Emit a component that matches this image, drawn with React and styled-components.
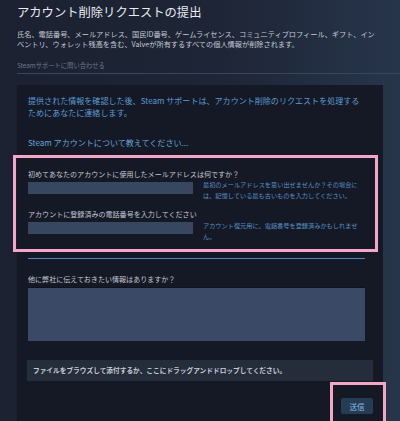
import styled, { createGlobalStyle } from 'styled-components'

const GlobalStyle = createGlobalStyle`
  html, body {
    margin: 0;
    padding: 0;
    height: 421px;
    overflow: hidden;
  }
  body {
    background: linear-gradient(90deg, #1b2130 0%, #1e2536 55%, #27354b 100%);
    font-family: "Noto Sans CJK JP", "Liberation Sans", sans-serif;
  }
`

const Page = styled.div`
  padding: 4px 0 0 17px;
`

const Title = styled.h1`
  margin: 0;
  font-size: 12.3px;
  line-height: 16px;
  font-weight: 400;
  color: #e8ecf2;
  white-space: nowrap;
`

const Intro = styled.p`
  margin: 8.75px 0 0;
  font-size: 7.2px;
  line-height: 10.5px;
  color: #c4cad4;
  white-space: nowrap;
`

const SupportLink = styled.div`
  margin-top: 11px;
  font-size: 6.3px;
  line-height: 10px;
  color: #6c7888;
  white-space: nowrap;
`

const Rule = styled.div`
  margin-top: 2.5px;
  height: 1px;
  background: #34485f;
`

const Panel = styled.div`
  margin: 10.5px 17px 0 0;
  padding: 10px 11px 0;
  background: #141925;
`

const Note = styled.p`
  margin: ${p => p.$gap || 0}px 0 0;
  font-size: 8.05px;
  line-height: 12px;
  color: ${p => p.$light ? '#6aa5d8' : '#5c9bd3'};
  white-space: nowrap;
`

const Highlight = styled.div`
  margin: 6px -6px 0 -15px;
  padding: 11px 12px 6.5px;
  border: 3px solid #f3a7c7;
`

const Label = styled.div`
  margin-top: ${p => p.$gap || 0}px;
  font-size: 7.05px;
  line-height: 10px;
  color: #c3c9d3;
  white-space: nowrap;
`

const FieldRow = styled.div`
  display: flex;
  align-items: flex-start;
  gap: 10px;
  margin-top: 3px;
`

const TextInput = styled.input`
  flex: none;
  width: 165px;
  height: 12.5px;
  padding: 0;
  border: none;
  outline: none;
  background: #384760;
`

const Help = styled.div`
  margin-top: ${p => p.$top}px;
  font-size: 6.2px;
  line-height: 11px;
  color: #5b90c6;
  white-space: nowrap;
`

const Separator = styled.div`
  margin: 6px 7px 0 0;
  height: 1.5px;
  background: #4c87ba;
`

const Message = styled.textarea`
  display: block;
  box-sizing: border-box;
  width: 337px;
  height: 54px;
  margin-top: 3px;
  padding: 0;
  resize: none;
  outline: none;
  border: none;
  border-top: 1px solid #0f131b;
  background: #3a4966;
`

const DropZone = styled.div`
  margin: 19px -1px 0;
  height: 21px;
  padding-left: 6px;
  display: flex;
  align-items: center;
  background: #252c3a;
  font-size: 6.7px;
  font-weight: 700;
  color: #c6cdd8;
  white-space: nowrap;
`

const Actions = styled.div`
  display: flex;
  justify-content: flex-end;
  margin: 1px -14px 0 0;
`

const ButtonMark = styled.div`
  padding: 6px 10px 7px 8px;
  border: 3px solid #f3a7c7;
`

const SubmitButton = styled.button`
  width: 32px;
  height: 16px;
  padding: 0;
  border: none;
  border-radius: 2px;
  background: #263c55;
  color: #8dbbe6;
  font-family: inherit;
  font-size: 7.5px;
`

export default function App() {
  return (
    <>
      <GlobalStyle />
      <Page>
        <Title>アカウント削除リクエストの提出</Title>
        <Intro>
          氏名、電話番号、メールアドレス、国民ID番号、ゲームライセンス、コミュニティプロフィール、ギフト、イン
          <br />
          ベントリ、ウォレット残高を含む、Valveが所有するすべての個人情報が削除されます。
        </Intro>
        <SupportLink>Steamサポートに問い合わせる</SupportLink>
        <Rule />
        <Panel>
          <Note>
            提供された情報を確認した後、Steam サポートは、アカウント削除のリクエストを処理する
            <br />
            ためにあなたに連絡します。
          </Note>
          <Note $gap={18} $light>Steam アカウントについて教えてください...</Note>
          <Highlight>
            <Label>初めてあなたのアカウントに使用したメールアドレスは何ですか？</Label>
            <FieldRow>
              <TextInput />
              <Help $top={-2.5}>
                最初のメールアドレスを思い出せませんか？その場合に
                <br />
                は、記憶している最も古いものを入力してください。
              </Help>
            </FieldRow>
            <Label $gap={7.5}>アカウントに登録済みの電話番号を入力してください</Label>
            <FieldRow>
              <TextInput />
              <Help $top={-1.5}>
                アカウント復元用に、電話番号を登録済みかもしれませ
                <br />
                ん。
              </Help>
            </FieldRow>
          </Highlight>
          <Separator />
          <Label $gap={14.5}>他に弊社に伝えておきたい情報はありますか？</Label>
          <Message />
          <DropZone>ファイルをブラウズして添付するか、ここにドラッグアンドドロップしてください。</DropZone>
          <Actions>
            <ButtonMark>
              <SubmitButton>送信</SubmitButton>
            </ButtonMark>
          </Actions>
        </Panel>
      </Page>
    </>
  )
}
